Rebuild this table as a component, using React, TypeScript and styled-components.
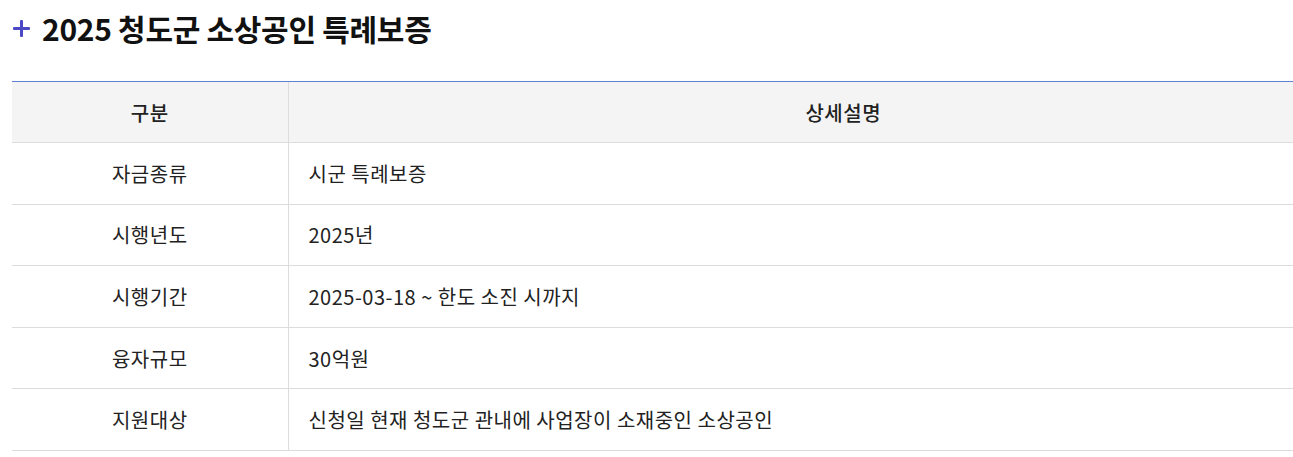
import React from 'react';
import styled, { createGlobalStyle } from 'styled-components';

const GlobalStyle = createGlobalStyle`
  html, body {
    margin: 0;
    padding: 0;
    background: #fff;
    overflow: hidden;
    font-family: 'Noto Sans CJK KR', 'Noto Sans', sans-serif;
    color: #222;
  }
`;

const ROWS = [
  { label: '자금종류', value: '시군 특례보증' },
  { label: '시행년도', value: '2025년' },
  { label: '시행기간', value: '2025-03-18 ~ 한도 소진 시까지' },
  { label: '융자규모', value: '30억원' },
  { label: '지원대상', value: '신청일 현재 청도군 관내에 사업장이 소재중인 소상공인' },
];

function PlusIcon() {
  return (
    <svg width="19" height="19" viewBox="0 0 19 19">
      <rect x="8" y="1" width="3" height="17" rx="1" fill="#4b49c4" />
      <rect x="1" y="8" width="17" height="3" rx="1" fill="#4b49c4" />
    </svg>
  );
}

export default function App() {
  return (
    <Page>
      <GlobalStyle />
      <Title>
        <PlusIcon />
        <TitleText>2025 청도군 소상공인 특례보증</TitleText>
      </Title>
      <TableWrap>
        <Table>
          <colgroup>
            <col style={{ width: 276 }} />
            <col />
          </colgroup>
          <thead>
            <tr>
              <HeadCell>구분</HeadCell>
              <HeadCell>상세설명</HeadCell>
            </tr>
          </thead>
          <tbody>
            {ROWS.map((row) => (
              <tr key={row.label}>
                <LabelCell>{row.label}</LabelCell>
                <ValueCell>{row.value}</ValueCell>
              </tr>
            ))}
          </tbody>
        </Table>
      </TableWrap>
    </Page>
  );
}

const Page = styled.div`
  padding: 8px 0 0 12px;
`;

const Title = styled.h2`
  display: flex;
  align-items: center;
  gap: 11px;
  margin: 0 0 33px 0;
  height: 40px;
`;

const TitleText = styled.span`
  font-size: 30px;
  font-weight: 700;
  letter-spacing: -0.3px;
  color: #111;
`;

const TableWrap = styled.div`
  overflow: hidden;
  border-top: 1px solid #5f80d0;
`;

const Table = styled.table`
  width: 1386px;
  border-collapse: collapse;
  table-layout: fixed;
  font-size: 20px;
  letter-spacing: 0.5px;
`;

const HeadCell = styled.th`
  height: 60px;
  padding: 0;
  background: #f4f4f4;
  font-weight: 500;
  font-size: 20px;
  color: #222;
  text-align: center;
  border-bottom: 1px solid #dcdcdc;
  & + & {
    border-left: 1px solid #dcdcdc;
  }
`;

const LabelCell = styled.td`
  height: 60.6px;
  padding: 0;
  text-align: center;
  color: #222;
  border-bottom: 1px solid #dcdcdc;
`;

const ValueCell = styled.td`
  height: 60.6px;
  padding: 0 0 0 20px;
  text-align: left;
  color: #222;
  border-bottom: 1px solid #dcdcdc;
  border-left: 1px solid #dcdcdc;
`;
